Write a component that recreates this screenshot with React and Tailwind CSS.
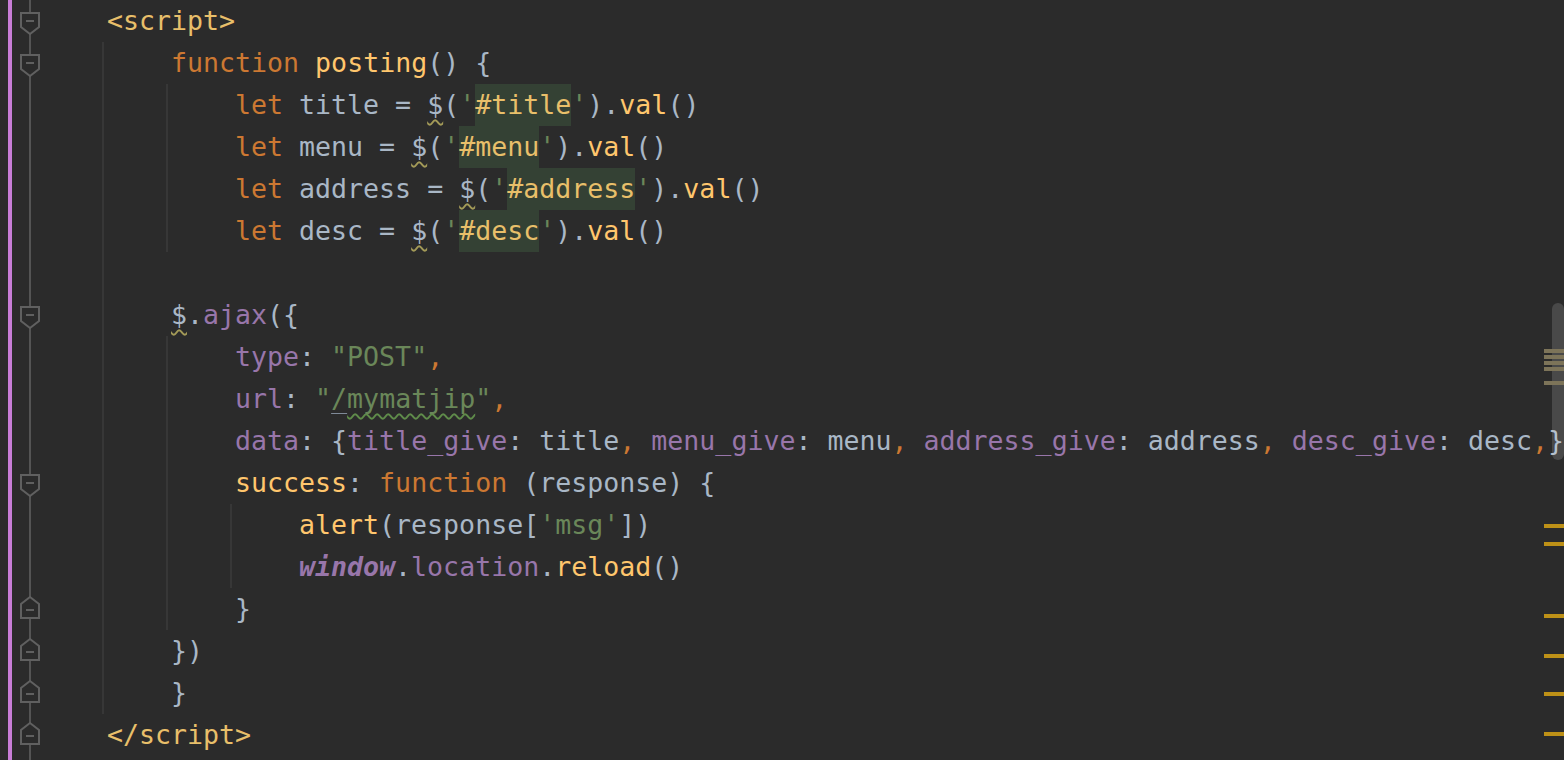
import React from "react";

const K = "text-[#cc7832]";
const F = "text-[#ffc66d]";
const T = "text-[#a9b7c6]";
const P = "text-[#9876aa]";
const S = "text-[#6a8759]";
const G = "text-[#e8bf6a]";
const DOLLAR = ["$", "text-[#a9b7c6] underline decoration-wavy decoration-[#a39a57] decoration-[1.5px] underline-offset-[5px] [text-decoration-skip-ink:none]"];
const HL = (t) => [t, "inline-block text-[#e8bf6a] bg-[#344134]"];

const sel = (name) => [
  ["let", K],
  [" " + name + " = ", T],
  DOLLAR,
  ["(", T],
  ["'", S],
  HL("#" + name),
  ["'", S],
  [").", T],
  ["val", F],
  ["()", T],
];

const lines = [
  { ind: 1, g: [], fold: "start", t: [["<script>", G]] },
  { ind: 2, g: [0], fold: "start", t: [["function", K], [" ", T], ["posting", F], ["() {", T]] },
  { ind: 3, g: [0, 1], t: sel("title") },
  { ind: 3, g: [0, 1], t: sel("menu") },
  { ind: 3, g: [0, 1], t: sel("address") },
  { ind: 3, g: [0, 1], t: sel("desc") },
  { ind: 1, g: [0], t: [] },
  { ind: 2, g: [0], fold: "start", t: [DOLLAR, [".", T], ["ajax", P], ["({", T]] },
  { ind: 3, g: [0, 1], t: [["type", P], [": ", T], ['"POST"', S], [",", K]] },
  {
    ind: 3,
    g: [0, 1],
    t: [
      ["url", P],
      [": ", T],
      ['"', S],
      ["/", "text-[#6a8759] underline decoration-[#7f8a98] decoration-1 underline-offset-[5px]"],
      ["mymatjip", "text-[#6a8759] underline decoration-wavy decoration-[#5f8c4a] decoration-[1.5px] underline-offset-[5px] [text-decoration-skip-ink:none]"],
      ['"', S],
      [",", K],
    ],
  },
  {
    ind: 3,
    g: [0, 1],
    t: [
      ["data", P],
      [": ", T],
      ["{", T],
      ["title_give", P],
      [": ", T],
      ["title", T],
      [", ", K],
      ["menu_give", P],
      [": ", T],
      ["menu", T],
      [", ", K],
      ["address_give", P],
      [": ", T],
      ["address", T],
      [", ", K],
      ["desc_give", P],
      [": ", T],
      ["desc", T],
      [",", K],
      ["}", T],
    ],
  },
  { ind: 3, g: [0, 1], fold: "start", t: [["success", F], [": ", T], ["function", K], [" (response) {", T]] },
  { ind: 4, g: [0, 1, 2], t: [["alert", F], ["(response[", T], ["'msg'", S], ["])", T]] },
  {
    ind: 4,
    g: [0, 1, 2],
    t: [["window", "text-[#9876aa] italic font-bold"], [".", T], ["location", P], [".", T], ["reload", F], ["()", T]],
  },
  { ind: 3, g: [0, 1], fold: "end", t: [["}", T]] },
  { ind: 2, g: [0], fold: "end", t: [["})", T]] },
  { ind: 2, g: [0], fold: "end", t: [["}", T]] },
  { ind: 1, g: [], fold: "end", t: [["</script>", G]] },
];

function FoldCell({ type }) {
  return (
    <svg width="31" height="42" viewBox="0 0 31 42" className="block shrink-0">
      <line x1="18" y1="0" x2="18" y2="42" stroke="#545454" strokeWidth="2" />
      {type === "start" && (
        <g>
          <polygon points="9,13 27,13 27,27 18,34 9,27" fill="#2b2b2b" stroke="#606060" strokeWidth="2" />
          <line x1="14" y1="21" x2="22" y2="21" stroke="#606060" strokeWidth="2" />
        </g>
      )}
      {type === "end" && (
        <g>
          <polygon points="18,9 27,16 27,30 9,30 9,16" fill="#2b2b2b" stroke="#606060" strokeWidth="2" />
          <line x1="14" y1="22" x2="22" y2="22" stroke="#606060" strokeWidth="2" />
        </g>
      )}
    </svg>
  );
}

const upperMarks = [349, 355, 361, 367, 381];
const lowerMarks = [524, 542, 614, 654, 692, 732];

export default function App() {
  return (
    <div className="relative flex h-[760px] w-[1564px] overflow-hidden bg-[#2b2b2b] font-['DejaVu_Sans_Mono',monospace] text-[26.6px]">
      <div className="w-[8px] shrink-0" />
      <div className="w-[4px] shrink-0 bg-[#c87dd6]" />
      <div className="flex w-[31px] shrink-0 flex-col">
        {lines.map((l, i) => (
          <FoldCell key={i} type={l.fold} />
        ))}
        <div className="flex-1">
          <div className="ml-[17px] h-full w-[2px] bg-[#545454]" />
        </div>
      </div>
      <div className="flex min-w-0 flex-1 flex-col">
        {lines.map((l, i) => (
          <div key={i} className="flex h-[42px] shrink-0 leading-[42px]">
            {Array.from({ length: l.ind }).map((_, s) => (
              <div key={s} className="flex w-[64px] shrink-0 justify-end">
                {l.g.includes(s) && <div className="mr-[3px] h-full w-[2px] bg-[#373737]" />}
              </div>
            ))}
            <span className="shrink-0 whitespace-pre">
              {l.t.map(([txt, cls], j) => (
                <span key={j} className={cls}>
                  {txt}
                </span>
              ))}
            </span>
          </div>
        ))}
      </div>

      {/* scrollbar thumb */}
      <div className="absolute right-0 top-[303px] h-[157px] w-[12px] rounded-[6px] bg-white/[0.14]" />
      {/* error stripe marks */}
      {upperMarks.map((y) => (
        <div key={y} className="absolute right-0 h-[4px] w-[20px] bg-[#7d7459]" style={{ top: y }} />
      ))}
      {lowerMarks.map((y) => (
        <div key={y} className="absolute right-0 h-[4px] w-[20px] bg-[#be9117]" style={{ top: y }} />
      ))}
    </div>
  );
}
